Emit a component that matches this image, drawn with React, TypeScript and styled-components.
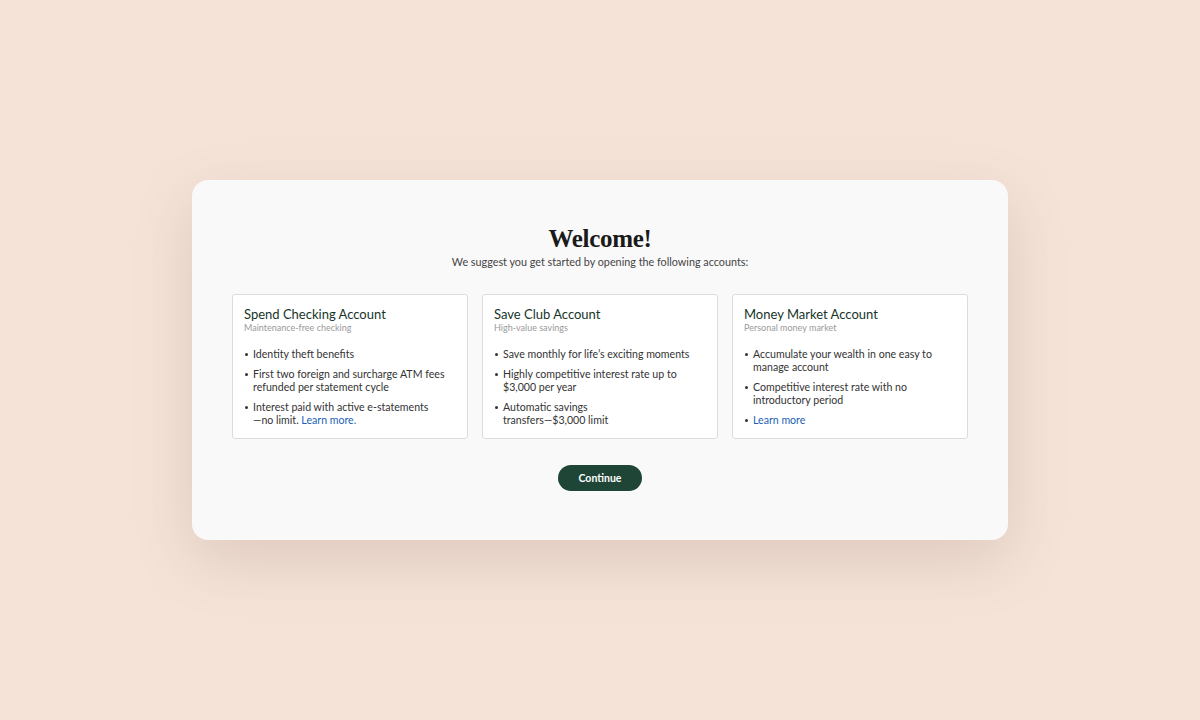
import styled, { createGlobalStyle } from "styled-components";

const GlobalStyle = createGlobalStyle`
  html, body {
    margin: 0;
    padding: 0;
    background: #f5e3d8;
  }
  body {
    font-family: Lato, "Open Sans", sans-serif;
  }
`;

const Page = styled.div`
  width: 1200px;
  height: 720px;
  display: flex;
  align-items: center;
  justify-content: center;
`;

const Panel = styled.div`
  width: 816px;
  height: 360px;
  box-sizing: border-box;
  background: #f9f9f9;
  border-radius: 16px;
  box-shadow: 0 20px 60px rgba(120, 90, 70, 0.18);
  padding: 44px 40px 0;
  display: flex;
  flex-direction: column;
  align-items: center;
`;

const Title = styled.h1`
  margin: 0;
  font-family: "Liberation Serif", "DejaVu Serif", serif;
  font-weight: 700;
  font-size: 25px;
  line-height: 30px;
  color: #1a1a1a;
  letter-spacing: -0.3px;
`;

const Subtitle = styled.p`
  margin: 1px 0 0;
  font-size: 10.8px;
  line-height: 14px;
  color: #444;
`;

const Cards = styled.div`
  margin-top: 25px;
  width: 100%;
  display: grid;
  grid-template-columns: repeat(3, 1fr);
  gap: 14px;
`;

const Card = styled.div`
  background: #fff;
  border: 1px solid #dcdcdc;
  border-radius: 3px;
  height: 145px;
  box-sizing: border-box;
  padding: 11px 11px 0;
`;

const CardTitle = styled.h2`
  margin: 0;
  font-size: 13px;
  line-height: 16px;
  font-weight: 400;
  color: #16352a;
`;

const CardSub = styled.div`
  font-size: 9px;
  line-height: 12px;
  color: #9a9a9a;
`;

const List = styled.ul`
  margin: 14px 0 0;
  padding: 0;
  list-style: none;
  display: flex;
  flex-direction: column;
  gap: 7px;
`;

const Item = styled.li`
  position: relative;
  padding-left: 9px;
  font-size: 10.6px;
  line-height: 13px;
  color: #333;

  &::before {
    content: "";
    position: absolute;
    left: 1px;
    top: 5px;
    width: 3px;
    height: 3px;
    border-radius: 50%;
    background: #333;
  }
`;

const Link = styled.a`
  color: #1a5fb4;
  text-decoration: none;
`;

const Button = styled.button`
  margin-top: 26px;
  width: 84px;
  height: 26px;
  border-radius: 13px;
  border: none;
  background: #1e4536;
  color: #fff;
  font-family: Lato, sans-serif;
  font-weight: 700;
  font-size: 10.5px;
`;

interface Account {
  title: string;
  sub: string;
  items: React.ReactNode[];
}

const accounts: Account[] = [
  {
    title: "Spend Checking Account",
    sub: "Maintenance-free checking",
    items: [
      "Identity theft benefits",
      "First two foreign and surcharge ATM fees refunded per statement cycle",
      <>Interest paid with active e-statements<br />—no limit. <Link href="#">Learn more.</Link></>,
    ],
  },
  {
    title: "Save Club Account",
    sub: "High-value savings",
    items: [
      "Save monthly for life’s exciting moments",
      "Highly competitive interest rate up to $3,000 per year",
      <>Automatic savings<br />transfers—$3,000 limit</>,
    ],
  },
  {
    title: "Money Market Account",
    sub: "Personal money market",
    items: [
      "Accumulate your wealth in one easy to manage account",
      "Competitive interest rate with no introductory period",
      <Link href="#">Learn more</Link>,
    ],
  },
];

export default function App() {
  return (
    <>
      <GlobalStyle />
      <Page>
        <Panel>
          <Title>Welcome!</Title>
          <Subtitle>We suggest you get started by opening the following accounts:</Subtitle>
          <Cards>
            {accounts.map((a) => (
              <Card key={a.title}>
                <CardTitle>{a.title}</CardTitle>
                <CardSub>{a.sub}</CardSub>
                <List>
                  {a.items.map((it, i) => (
                    <Item key={i}>{it}</Item>
                  ))}
                </List>
              </Card>
            ))}
          </Cards>
          <Button>Continue</Button>
        </Panel>
      </Page>
    </>
  );
}
